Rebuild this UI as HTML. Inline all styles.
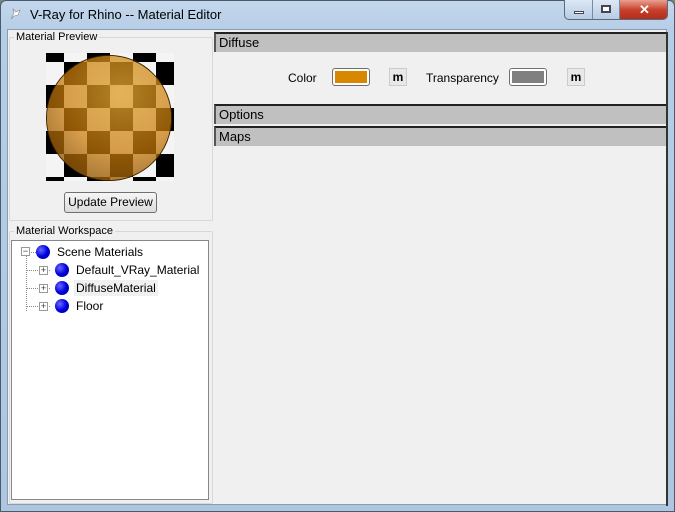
<!DOCTYPE html>
<html><head><style>
*{margin:0;padding:0;box-sizing:border-box}
body{width:675px;height:512px;overflow:hidden;font-family:"Liberation Sans",sans-serif;font-size:12px;color:#000;background:#7a8a70;position:relative}
.frame{position:absolute;left:0;top:0;width:675px;height:512px;background:linear-gradient(#c4d8ec,#b5cde6 30px,#aec6e0);border:1px solid #4a5a70;border-radius:6px 6px 0 0}
.title{position:absolute;left:30px;top:7px;font-size:13px;color:#000}
.client{position:absolute;left:7px;top:29px;width:660px;height:476px;background:#f0f0f0;border:1px solid #8a9ab0}
.grp{position:absolute;border:1px solid #d8d8d8;border-radius:2px}
.lbl{position:absolute;background:#f0f0f0;padding:0 2px;font-size:11px;top:-7px;left:4px}
.hdr{position:absolute;left:206px;width:453px;height:20px;background:#c0c0c0;border-top:2px solid #222;border-left:2px solid #555;padding:1px 0 0 3px;font-size:13px}
.btn{position:absolute;background:linear-gradient(#f6f6f6,#dcdcdc);border:1px solid #707070;border-radius:3px;font-size:12px;text-align:center}
.sw{position:absolute;width:38px;height:18px;border:1px solid #707070;border-radius:3px;padding:2px;background:#fff}
.m{position:absolute;width:18px;height:18px;border:1px solid #ccc;background:#e8e8e8;font-weight:bold;font-size:12px;text-align:center;line-height:16px}
.ball{position:absolute;width:14px;height:14px;border-radius:50%;background:radial-gradient(circle at 35% 35%,#6a6aff,#0000e0 50%,#000080)}
.pl{position:absolute;width:9px;height:9px;border:1px solid #999;background:#fff;font-size:9px;line-height:7px;text-align:center;color:#333}
.tx{position:absolute;font-size:12px}
</style></head><body>
<div class="frame"></div>
<svg style="position:absolute;left:8px;top:7px" width="14" height="14"><path d="M3 12 L6 6 L5 2 L8 5 L12 3 L10 8 L6 9 Z" fill="#fff" stroke="#888" stroke-width=".6"/></svg>
<div class="title">V-Ray for Rhino -- Material Editor</div>
<div style="position:absolute;left:564px;top:0;width:104px;height:20px;border:1px solid #5a6a80;border-top:none;border-radius:0 0 5px 5px;background:linear-gradient(#dce8f4,#b8cce4);overflow:hidden">
<div style="position:absolute;left:0;top:0;width:28px;height:20px;border-right:1px solid #7a8aa0"><div style="position:absolute;left:9px;top:11px;width:10px;height:3px;background:#fff;border:1px solid #445"></div></div>
<div style="position:absolute;left:28px;top:0;width:27px;height:20px;border-right:1px solid #7a8aa0"><div style="position:absolute;left:8px;top:5px;width:10px;height:8px;border:2px solid #445;background:#fff"></div></div>
<div style="position:absolute;left:55px;top:0;width:49px;height:20px;background:linear-gradient(#e8a090,#c8402a 50%,#b02a18);color:#fff;font-weight:bold;text-align:center;font-size:13px;line-height:19px">✕</div>
</div>
<div class="client">
<div class="grp" style="left:1px;top:7px;width:204px;height:184px"><div class="lbl">Material Preview</div></div>
<div style="position:absolute;left:38px;top:23px;width:128px;height:128px;overflow:hidden;background-color:#f4f4f4;background-image:conic-gradient(#000 0 25%,#f4f4f4 0 50%,#000 0 75%,#f4f4f4 0);background-size:46px 46px;background-position:18px -14px">
<div style="position:absolute;left:0;top:2px;width:126px;height:126px;border-radius:50%;overflow:hidden;border:1px solid #3a2000;background:#c88a30">
<div style="position:absolute;inset:0;background-image:conic-gradient(#8a5200 0 25%,#d8a050 0 50%,#8a5200 0 75%,#d8a050 0);background-size:46px 46px;background-position:17px -17px;opacity:.85"></div>
<div style="position:absolute;inset:0;background:radial-gradient(circle at 60% 30%,rgba(255,230,120,.3),rgba(0,0,0,0) 50%,rgba(40,20,0,.45) 100%)"></div>
</div></div>
<div class="btn" style="left:56px;top:162px;width:93px;height:21px;line-height:19px">Update Preview</div>
<div class="grp" style="left:1px;top:201px;width:204px;height:273px"><div class="lbl">Material Workspace</div></div>
<div style="position:absolute;left:3px;top:210px;width:198px;height:260px;background:#fff;border:1px solid #828790">
<div style="position:absolute;left:14px;top:14px;height:56px;border-left:1px dotted #888"></div>
<div style="position:absolute;left:14px;top:11px;width:14px;border-top:1px dotted #888"></div>
<div style="position:absolute;left:14px;top:29px;width:24px;border-top:1px dotted #888"></div>
<div style="position:absolute;left:14px;top:47px;width:24px;border-top:1px dotted #888"></div>
<div style="position:absolute;left:14px;top:65px;width:24px;border-top:1px dotted #888"></div>
<div class="pl" style="left:9px;top:6px">−</div>
<div class="ball" style="left:24px;top:4px"></div><div class="tx" style="left:45px;top:4px">Scene Materials</div>
<div class="pl" style="left:27px;top:25px">+</div>
<div class="ball" style="left:43px;top:22px"></div><div class="tx" style="left:64px;top:22px">Default_VRay_Material</div>
<div class="pl" style="left:27px;top:43px">+</div>
<div class="ball" style="left:43px;top:40px"></div><div class="tx" style="left:62px;top:39px;background:#f0f0f0;padding:1px 2px">DiffuseMaterial</div>
<div class="pl" style="left:27px;top:61px">+</div>
<div class="ball" style="left:43px;top:58px"></div><div class="tx" style="left:64px;top:58px">Floor</div>
</div>
<div class="hdr" style="top:2px">Diffuse</div>
<div class="tx" style="left:280px;top:41px">Color</div>
<div class="sw" style="left:324px;top:38px"><div style="width:100%;height:100%;background:#d88800"></div></div>
<div class="m" style="left:381px;top:38px">m</div>
<div class="tx" style="left:418px;top:41px">Transparency</div>
<div class="sw" style="left:501px;top:38px"><div style="width:100%;height:100%;background:#808080"></div></div>
<div class="m" style="left:559px;top:38px">m</div>
<div class="hdr" style="top:74px">Options</div>
<div class="hdr" style="top:96px">Maps</div>
<div style="position:absolute;left:658px;top:2px;width:2px;height:474px;background:#333"></div>
</div>
</body></html>
